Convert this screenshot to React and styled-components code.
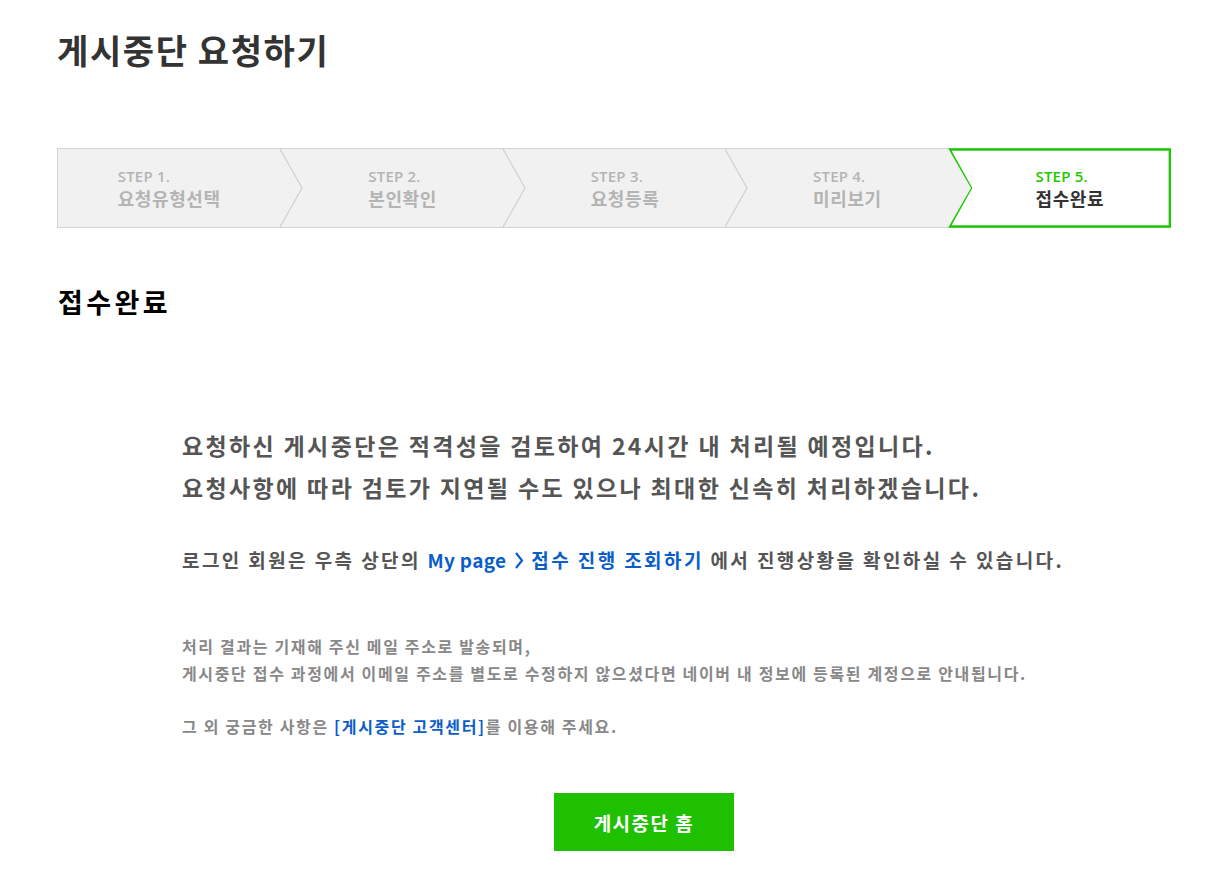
import React from "react";
import styled, { createGlobalStyle } from "styled-components";

const GlobalStyle = createGlobalStyle`
  html, body {
    margin: 0;
    padding: 0;
    background: #fff;
  }
  body {
    font-family: "Noto Sans CJK KR", "Noto Sans", sans-serif;
  }
`;

const Page = styled.div`
  width: 1225px;
  box-sizing: border-box;
  padding: 26px 54px 0 57px;
`;

const Title = styled.h1`
  margin: 0;
  font-size: 34px;
  line-height: 48px;
  font-weight: 700;
  color: #333;
  letter-spacing: 1.6px;
`;

const Steps = styled.ol`
  list-style: none;
  margin: 74px 0 0;
  padding: 0;
  display: grid;
  grid-template-columns: repeat(5, 1fr);
  height: 80px;
  box-sizing: border-box;
  border: 1px solid #d3d3d3;
  background: #f1f1f1;
`;

const Step = styled.li`
  position: relative;
  display: flex;
  align-items: center;
  justify-content: center;
  padding-left: ${(p) => (p.$first ? 0 : 22)}px;
`;

const Chevron = styled.svg`
  position: absolute;
  top: -1px;
  left: 100%;
  width: 24px;
  height: 80px;
  z-index: 2;
`;

const ActiveShape = styled.svg`
  position: absolute;
  top: -1px;
  left: 0;
  width: calc(100% + 1px);
  height: 80px;
  z-index: 1;
`;

const StepText = styled.div`
  position: relative;
  z-index: 3;
  display: flex;
  flex-direction: column;
  margin-top: 1px;
`;

const StepNo = styled.span`
  font-family: "Open Sans", "Noto Sans", sans-serif;
  font-size: 15px;
  line-height: 18px;
  font-weight: 600;
  letter-spacing: 0.2px;
  color: ${(p) => (p.$active ? "#1ec800" : "#b4b4b4")};
`;

const StepName = styled.span`
  font-size: 18px;
  line-height: 26px;
  font-weight: 700;
  letter-spacing: 0.6px;
  color: ${(p) => (p.$active ? "#333" : "#b4b4b4")};
`;

const SubTitle = styled.h2`
  margin: 56px 0 0 1px;
  font-size: 27px;
  line-height: 36px;
  font-weight: 700;
  color: #000;
  letter-spacing: 3.4px;
`;

const Body = styled.div`
  padding: 104px 0 0 125px;
`;

const Lead = styled.p`
  margin: 0;
  font-size: 23px;
  line-height: 42px;
  font-weight: 700;
  color: #555;
  letter-spacing: 2.35px;
`;

const Info = styled.p`
  margin: 38px 0 0;
  font-size: 19px;
  line-height: 28px;
  font-weight: 700;
  color: #555;
  letter-spacing: 2.4px;
`;

const Link = styled.span`
  color: #0b5ec9;
`;

const Latin = styled.span`
  letter-spacing: 0.3px;
`;

const Arrow = styled.svg`
  width: 10px;
  height: 17px;
  margin: 0 7px 0 8px;
  vertical-align: -1px;
`;

const Notes = styled.div`
  margin-top: 59px;
  font-size: 16px;
  line-height: 27px;
  font-weight: 700;
  color: #888;
  letter-spacing: 1.65px;
`;

const NoteLine = styled.p`
  margin: ${(p) => (p.$gap ? "26px" : "0")} 0 0;
`;

const ButtonRow = styled.div`
  display: flex;
  justify-content: center;
  margin-top: 53px;
  padding-left: 60px;
`;

const HomeButton = styled.button`
  width: 180px;
  height: 58px;
  border: 0;
  background: #1ec000;
  color: #fff;
  font-family: "Noto Sans CJK KR", "Noto Sans", sans-serif;
  font-size: 19px;
  font-weight: 700;
  letter-spacing: 1.5px;
  cursor: pointer;
`;

const steps = ["요청유형선택", "본인확인", "요청등록", "미리보기", "접수완료"];

export default function App() {
  const active = 4;
  return (
    <Page>
      <GlobalStyle />
      <Title>게시중단 요청하기</Title>
      <Steps>
        {steps.map((name, i) => {
          const isActive = i === active;
          return (
            <Step key={name} $first={i === 0}>
              {isActive && (
                <ActiveShape viewBox="0 0 224 80" preserveAspectRatio="none">
                  <polygon
                    points="1.5,1.5 222.5,1.5 222.5,78.5 1.5,78.5 23,40"
                    fill="#fff"
                    stroke="#1ec800"
                    strokeWidth="2.5"
                  />
                </ActiveShape>
              )}
              {i < active - 1 && (
                <Chevron viewBox="0 0 24 80">
                  <polyline points="0,1 22,40 0,79" fill="none" stroke="#cfcfcf" strokeWidth="1.2" />
                </Chevron>
              )}
              {i === active - 1 && (
                <Chevron viewBox="0 0 24 80">
                  <polygon points="0,0 23,40 0,80" fill="#f1f1f1" />
                </Chevron>
              )}
              <StepText>
                <StepNo $active={isActive}>STEP {i + 1}.</StepNo>
                <StepName $active={isActive}>{name}</StepName>
              </StepText>
            </Step>
          );
        })}
      </Steps>
      <SubTitle>접수완료</SubTitle>
      <Body>
        <Lead>
          요청하신 게시중단은 적격성을 검토하여 24시간 내 처리될 예정입니다.
          <br />
          요청사항에 따라 검토가 지연될 수도 있으나 최대한 신속히 처리하겠습니다.
        </Lead>
        <Info>
          로그인 회원은 우측 상단의{" "}
          <Link>
            <Latin>My page</Latin>
            <Arrow viewBox="0 0 10 17">
              <polyline points="2,1 8,8.5 2,16" fill="none" stroke="#0b5ec9" strokeWidth="2.2" />
            </Arrow>
            접수 진행 조회하기
          </Link>{" "}
          에서 진행상황을 확인하실 수 있습니다.
        </Info>
        <Notes>
          <NoteLine>처리 결과는 기재해 주신 메일 주소로 발송되며,</NoteLine>
          <NoteLine>
            게시중단 접수 과정에서 이메일 주소를 별도로 수정하지 않으셨다면 네이버 내 정보에 등록된 계정으로 안내됩니다.
          </NoteLine>
          <NoteLine $gap>
            그 외 궁금한 사항은 <Link>[게시중단 고객센터]</Link>를 이용해 주세요.
          </NoteLine>
        </Notes>
      </Body>
      <ButtonRow>
        <HomeButton>게시중단 홈</HomeButton>
      </ButtonRow>
    </Page>
  );
}
